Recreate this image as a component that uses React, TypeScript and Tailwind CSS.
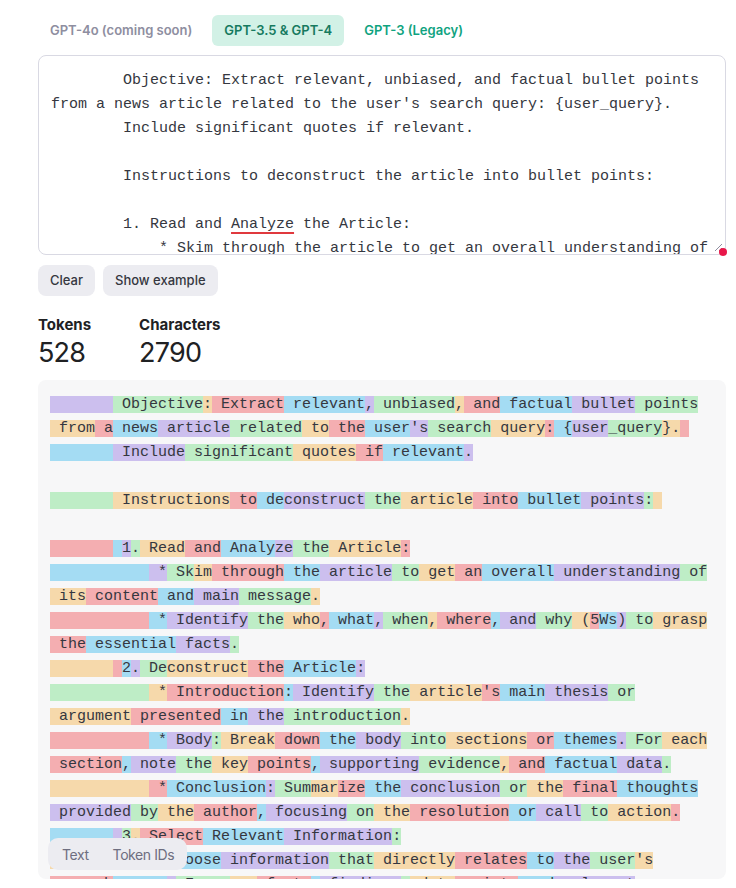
import React from "react";

const COLORS = [
  "bg-[rgba(107,64,216,0.3)]",
  "bg-[rgba(104,222,122,0.4)]",
  "bg-[rgba(244,172,54,0.4)]",
  "bg-[rgba(239,65,70,0.4)]",
  "bg-[rgba(39,181,234,0.4)]",
];

const LINES: string[][] = [
  ["       ", " Objective", ":", " Extract", " relevant", ",", " unbiased", ",", " and", " factual", " bullet", " points"],
  [" from", " a", " news", " article", " related", " to", " the", " user", "'s", " search", " query", ":", " {", "user", "_query", "}.", " "],
  ["       ", " Include", " significant", " quotes", " if", " relevant", "."],
  [],
  ["       ", " Instructions", " to", " de", "construct", " the", " article", " into", " bullet", " points", ":", " "],
  [],
  ["       ", " ", "1", ".", " Read", " and", " Analy", "ze", " the", " Article", ":"],
  ["           ", " *", " Sk", "im", " through", " the", " article", " to", " get", " an", " overall", " understanding", " of"],
  [" its", " content", " and", " main", " message", "."],
  ["           ", " *", " Identify", " the", " who", ",", " what", ",", " when", ",", " where", ",", " and", " why", " (", "5", "Ws", ")", " to", " grasp"],
  [" the", " essential", " facts", "."],
  ["       ", " ", "2", ".", " De", "construct", " the", " Article", ":"],
  ["           ", " *", " Introduction", ":", " Identify", " the", " article", "'s", " main", " thesis", " or"],
  [" argument", " presented", " in", " the", " introduction", "."],
  ["           ", " *", " Body", ":", " Break", " down", " the", " body", " into", " sections", " or", " themes", ".", " For", " each"],
  [" section", ",", " note", " the", " key", " points", ",", " supporting", " evidence", ",", " and", " factual", " data", "."],
  ["           ", " *", " Conclusion", ":", " Sum", "mar", "ize", " the", " conclusion", " or", " the", " final", " thoughts"],
  [" provided", " by", " the", " author", ",", " focusing", " on", " the", " resolution", " or", " call", " to", " action", "."],
  ["       ", " ", "3", ".", " Select", " Relevant", " Information", ":"],
  ["          ", " *", " Choose", " information", " that", " directly", " relates", " to", " the", " user", "'s"],
  [" search", " query", ".", " Focus", " on", " facts", ",", " findings", ",", " data", " points", " and", " relevant"],
];

function TokenView() {
  let idx = 0;
  return (
    <div className="px-3 pt-[13px] font-['Liberation_Mono',monospace] text-[15px] leading-6 text-[#353740]">
      {LINES.map((line, li) => (
        <div key={li} className="h-6 whitespace-pre">
          {line.map((t, ti) => {
            const c = COLORS[idx % 5];
            idx++;
            return (
              <span key={ti} className={c}>
                {t}
              </span>
            );
          })}
        </div>
      ))}
    </div>
  );
}

const INPUT_LINES = [
  "        Objective: Extract relevant, unbiased, and factual bullet points",
  "from a news article related to the user's search query: {user_query}.",
  "        Include significant quotes if relevant.",
  "",
  "        Instructions to deconstruct the article into bullet points:",
  "",
  "ANALYZE",
  "            * Skim through the article to get an overall understanding of",
  "            * Identify the who, what, when, where, and why (5Ws) to grasp",
];

export default function App() {
  return (
    <div className="min-h-[888px] w-[736px] bg-white font-['Inter',sans-serif] text-[#353740]">
      <div className="pl-[38px] pr-[10px] pt-[15px]">
        {/* tabs */}
        <div className="flex gap-2 text-[13px] font-semibold">
          <div className="flex h-[31px] items-center rounded-md px-3 pt-px text-[#8e8ea0]">GPT-4o (coming soon)</div>
          <div className="flex h-[31px] items-center rounded-md bg-[#d2f1e6] px-[12px] pt-px text-[#167a5f]">GPT-3.5 &amp; GPT-4</div>
          <div className="flex h-[31px] items-center rounded-md px-3 pt-px text-[#10a37f]">GPT-3 (Legacy)</div>
        </div>

        {/* textarea */}
        <div className="relative mt-[9px] h-[200px] rounded-lg border border-[#d9d9e3] bg-white">
          <div className="h-full overflow-hidden px-3 pt-[13px] font-['Liberation_Mono',monospace] text-[15px] leading-6 text-[#353740]">
            {INPUT_LINES.map((l, i) =>
              l === "ANALYZE" ? (
                <div key={i} className="h-6 whitespace-pre">
                  {"        1. Read and "}
                  <span className="underline decoration-[#e0393e] decoration-2 underline-offset-[4px]">Analyze</span>
                  {" the Article:"}
                </div>
              ) : (
                <div key={i} className="h-6 whitespace-pre">
                  {l}
                </div>
              )
            )}
          </div>
          <svg className="absolute bottom-[2px] right-[2px]" width="9" height="9" viewBox="0 0 9 9">
            <line x1="8" y1="1" x2="1" y2="8" stroke="#8e8ea0" strokeWidth="1" />
            <line x1="8" y1="5" x2="5" y2="8" stroke="#8e8ea0" strokeWidth="1" />
          </svg>
          <div className="absolute bottom-[-2px] right-[-2px] h-[8px] w-[8px] rounded-full bg-[#e8174a]" />
        </div>

        {/* buttons */}
        <div className="mt-[10px] flex gap-2 text-[13px] font-medium">
          <div className="flex h-[31px] items-center rounded-lg bg-[#ececf1] px-3 pt-px text-[#353740]">Clear</div>
          <div className="flex h-[31px] items-center rounded-lg bg-[#ececf1] px-3 pt-px text-[#353740]">Show example</div>
        </div>

        {/* stats */}
        <div className="mt-[19px] flex gap-12">
          <div>
            <div className="text-[15px] font-bold leading-5 text-[#202123]">Tokens</div>
            <div className="mt-[2px] text-[27px] leading-8 tracking-[-0.03em] text-[#202123]">528</div>
          </div>
          <div>
            <div className="text-[15px] font-bold leading-5 text-[#202123]">Characters</div>
            <div className="mt-[2px] text-[27px] leading-8 tracking-[-0.03em] text-[#202123]">2790</div>
          </div>
        </div>

        {/* tokens */}
        <div className="relative mt-[11px] h-[499px] overflow-hidden rounded-lg bg-[#f7f7f8]">
          <TokenView />
          <div className="absolute bottom-[9px] left-[10px] flex h-[32px] items-center rounded-[10px] bg-[#ececf1] pl-[14px] pr-[13px] text-[14px] tracking-[-0.03em] text-[#6e6e80]">
            <span>Text</span>
            <span className="ml-[24px]">Token IDs</span>
          </div>
        </div>
      </div>
    </div>
  );
}
